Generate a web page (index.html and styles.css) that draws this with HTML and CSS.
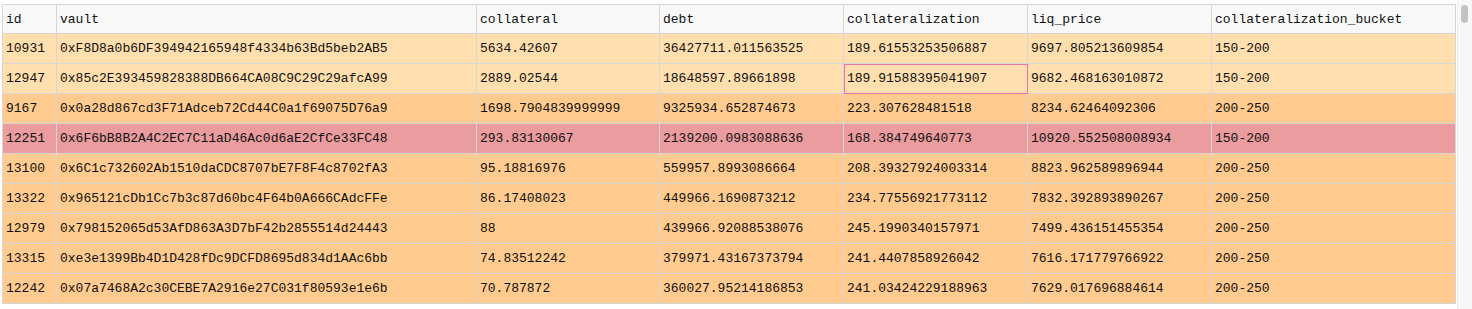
FILE: index.html
```html
<!DOCTYPE html>
<html>
<head>
<meta charset="utf-8">
<link rel="stylesheet" href="styles.css">
</head>
<body>
<div class="frame">
  <div class="pane">
    <table class="grid">
      <thead>
        <tr>
          <th class="c-id">id</th>
          <th class="c-vault">vault</th>
          <th class="c-num">collateral</th>
          <th class="c-wide">debt</th>
          <th class="c-wide">collateralization</th>
          <th class="c-wide">liq_price</th>
          <th class="c-bucket">collateralization_bucket</th>
        </tr>
      </thead>
      <tbody>
        <tr class="light"><td>10931</td><td>0xF8D8a0b6DF394942165948f4334b63Bd5beb2AB5</td><td>5634.42607</td><td>36427711.011563525</td><td>189.61553253506887</td><td>9697.805213609854</td><td>150-200</td></tr>
        <tr class="light"><td>12947</td><td>0x85c2E393459828388DB664CA08C9C29C29afcA99</td><td>2889.02544</td><td>18648597.89661898</td><td class="selected">189.91588395041907</td><td>9682.468163010872</td><td>150-200</td></tr>
        <tr class="mid"><td>9167</td><td>0x0a28d867cd3F71Adceb72Cd44C0a1f69075D76a9</td><td>1698.7904839999999</td><td>9325934.652874673</td><td>223.307628481518</td><td>8234.62464092306</td><td>200-250</td></tr>
        <tr class="risk"><td>12251</td><td>0x6F6bB8B2A4C2EC7C11aD46Ac0d6aE2CfCe33FC48</td><td>293.83130067</td><td>2139200.0983088636</td><td>168.384749640773</td><td>10920.552508008934</td><td>150-200</td></tr>
        <tr class="mid"><td>13100</td><td>0x6C1c732602Ab1510daCDC8707bE7F8F4c8702fA3</td><td>95.18816976</td><td>559957.8993086664</td><td>208.39327924003314</td><td>8823.962589896944</td><td>200-250</td></tr>
        <tr class="mid"><td>13322</td><td>0x965121cDb1Cc7b3c87d60bc4F64b0A666CAdcFFe</td><td>86.17408023</td><td>449966.1690873212</td><td>234.77556921773112</td><td>7832.392893890267</td><td>200-250</td></tr>
        <tr class="mid"><td>12979</td><td>0x798152065d53AfD863A3D7bF42b2855514d24443</td><td>88</td><td>439966.92088538076</td><td>245.1990340157971</td><td>7499.436151455354</td><td>200-250</td></tr>
        <tr class="mid"><td>13315</td><td>0xe3e1399Bb4D1D428fDc9DCFD8695d834d1AAc6bb</td><td>74.83512242</td><td>379971.43167373794</td><td>241.4407858926042</td><td>7616.171779766922</td><td>200-250</td></tr>
        <tr class="mid"><td>12242</td><td>0x07a7468A2c30CEBE7A2916e27C031f80593e1e6b</td><td>70.787872</td><td>360027.95214186853</td><td>241.03424229188963</td><td>7629.017696884614</td><td>200-250</td></tr>
      </tbody>
    </table>
  </div>
  <div class="scrollbar"><div class="thumb"></div></div>
</div>
</body>
</html>
```
FILE: styles.css
```css
* { box-sizing: border-box; }
html, body { margin: 0; padding: 0; background: #ffffff; }
body { width: 1472px; height: 309px; overflow: hidden; }

.frame {
  display: flex;
  height: 309px;
}

.pane {
  width: 1457px;
  padding: 4px 0 0 2px;
  overflow: hidden;
}

.grid {
  border-collapse: separate;
  border-spacing: 0;
  table-layout: fixed;
  width: 1454px;
  font-family: "Liberation Mono", "DejaVu Sans Mono", monospace;
  font-size: 13px;
  color: #111;
}

.grid th, .grid td {
  height: 30px;
  padding: 0 3px;
  border-right: 1px solid #d7d7d7;
  border-bottom: 1px solid #d7d7d7;
  text-align: left;
  font-weight: normal;
  white-space: nowrap;
  overflow: hidden;
  vertical-align: middle;
}

.grid th {
  background: #f8f8f8;
  border-top: 1px solid #d7d7d7;
  padding-top: 1px;
}

.grid th:first-child, .grid td:first-child { border-left: 1px solid #d7d7d7; }

.c-id { width: 55px; }
.c-vault { width: 420px; }
.c-num { width: 183px; }
.c-wide { width: 184px; }
.c-bucket { width: 244px; }

.light td { background: #ffdfad; }
.mid td { background: #ffcb8e; }
.risk td { background: #ea9c9f; }

.grid td.selected {
  outline: 1px solid #f26fae;
  outline-offset: -1px;
}

.scrollbar {
  width: 15px;
  height: 309px;
  background: #f7f7f7;
  border-left: 1px solid #ebebeb;
  padding: 5px 0 0 3px;
}

.thumb {
  width: 7px;
  height: 18px;
  border-radius: 4px;
  background: #c3c3c3;
}
```
